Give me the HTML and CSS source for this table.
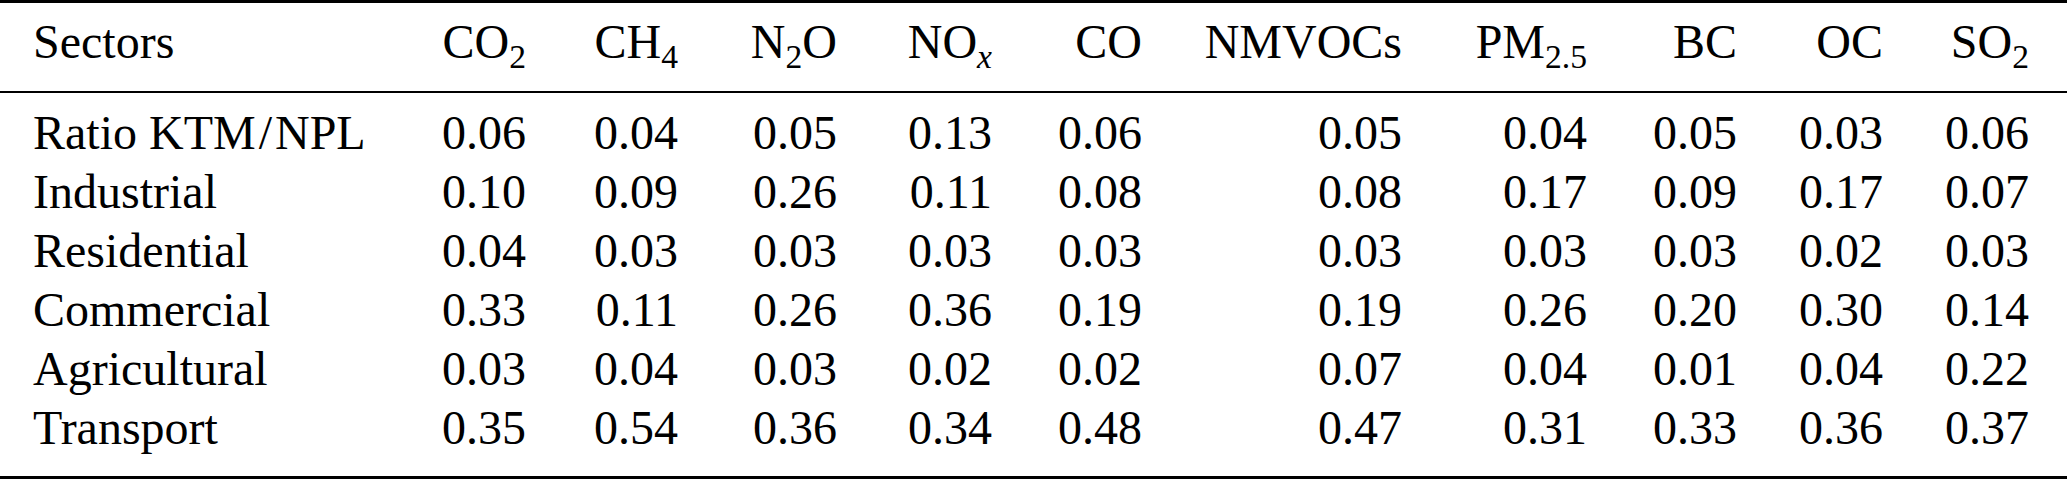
FILE: index.html
```html
<!DOCTYPE html>
<html>
<head>
  <link rel="stylesheet" href="styles.css">
</head>
<body>
  <table class="emissions">
    <colgroup>
      <col class="col-sector">
      <col class="col-co2">
      <col class="col-ch4">
      <col class="col-n2o">
      <col class="col-nox">
      <col class="col-co">
      <col class="col-nmvoc">
      <col class="col-pm">
      <col class="col-bc">
      <col class="col-oc">
      <col class="col-so2">
    </colgroup>
    <thead>
      <tr>
        <th>Sectors</th>
        <th>CO<sub>2</sub></th>
        <th>CH<sub>4</sub></th>
        <th>N<sub>2</sub>O</th>
        <th>NO<sub><i>x</i></sub></th>
        <th>CO</th>
        <th>NMVOCs</th>
        <th>PM<sub>2.5</sub></th>
        <th>BC</th>
        <th>OC</th>
        <th>SO<sub>2</sub></th>
      </tr>
    </thead>
    <tbody>
      <tr>
        <td>Ratio KTM<span class="slash">/</span>NPL</td>
        <td>0.06</td><td>0.04</td><td>0.05</td><td>0.13</td><td>0.06</td>
        <td>0.05</td><td>0.04</td><td>0.05</td><td>0.03</td><td>0.06</td>
      </tr>
      <tr>
        <td>Industrial</td>
        <td>0.10</td><td>0.09</td><td>0.26</td><td>0.11</td><td>0.08</td>
        <td>0.08</td><td>0.17</td><td>0.09</td><td>0.17</td><td>0.07</td>
      </tr>
      <tr>
        <td>Residential</td>
        <td>0.04</td><td>0.03</td><td>0.03</td><td>0.03</td><td>0.03</td>
        <td>0.03</td><td>0.03</td><td>0.03</td><td>0.02</td><td>0.03</td>
      </tr>
      <tr>
        <td>Commercial</td>
        <td>0.33</td><td>0.11</td><td>0.26</td><td>0.36</td><td>0.19</td>
        <td>0.19</td><td>0.26</td><td>0.20</td><td>0.30</td><td>0.14</td>
      </tr>
      <tr>
        <td>Agricultural</td>
        <td>0.03</td><td>0.04</td><td>0.03</td><td>0.02</td><td>0.02</td>
        <td>0.07</td><td>0.04</td><td>0.01</td><td>0.04</td><td>0.22</td>
      </tr>
      <tr>
        <td>Transport</td>
        <td>0.35</td><td>0.54</td><td>0.36</td><td>0.34</td><td>0.48</td>
        <td>0.47</td><td>0.31</td><td>0.33</td><td>0.36</td><td>0.37</td>
      </tr>
    </tbody>
  </table>
</body>
</html>
```

FILE: styles.css
```css
* {
  box-sizing: border-box;
}

body {
  margin: 0;
  background: #fff;
  color: #000;
}

.emissions {
  width: 2067px;
  table-layout: fixed;
  border-collapse: collapse;
  font-family: "Liberation Serif", "Times New Roman", serif;
  font-size: 48px;
  line-height: 59px;
  border-top: 3px solid #000;
  border-bottom: 3px solid #000;
}

.col-sector { width: 436px; }
.col-co2 { width: 90px; }
.col-ch4 { width: 152px; }
.col-n2o { width: 159px; }
.col-nox { width: 155px; }
.col-co { width: 150px; }
.col-nmvoc { width: 260px; }
.col-pm { width: 185px; }
.col-bc { width: 150px; }
.col-oc { width: 146px; }
.col-so2 { width: 184px; }

.emissions th,
.emissions td {
  padding: 0;
  text-align: right;
  white-space: nowrap;
  font-weight: normal;
}

.emissions th:first-child,
.emissions td:first-child {
  text-align: left;
  padding-left: 33px;
}

.emissions th:last-child,
.emissions td:last-child {
  padding-right: 38px;
}

.emissions thead th {
  padding-top: 9px;
  padding-bottom: 20px;
  border-bottom: 2px solid #000;
}

.emissions tbody tr:first-child td {
  padding-top: 10px;
}

.emissions tbody tr:last-child td {
  padding-bottom: 19px;
}

sub {
  font-size: 0.7em;
  line-height: 0;
  vertical-align: -0.3em;
}

.slash {
  margin: 0 3px;
}
```
